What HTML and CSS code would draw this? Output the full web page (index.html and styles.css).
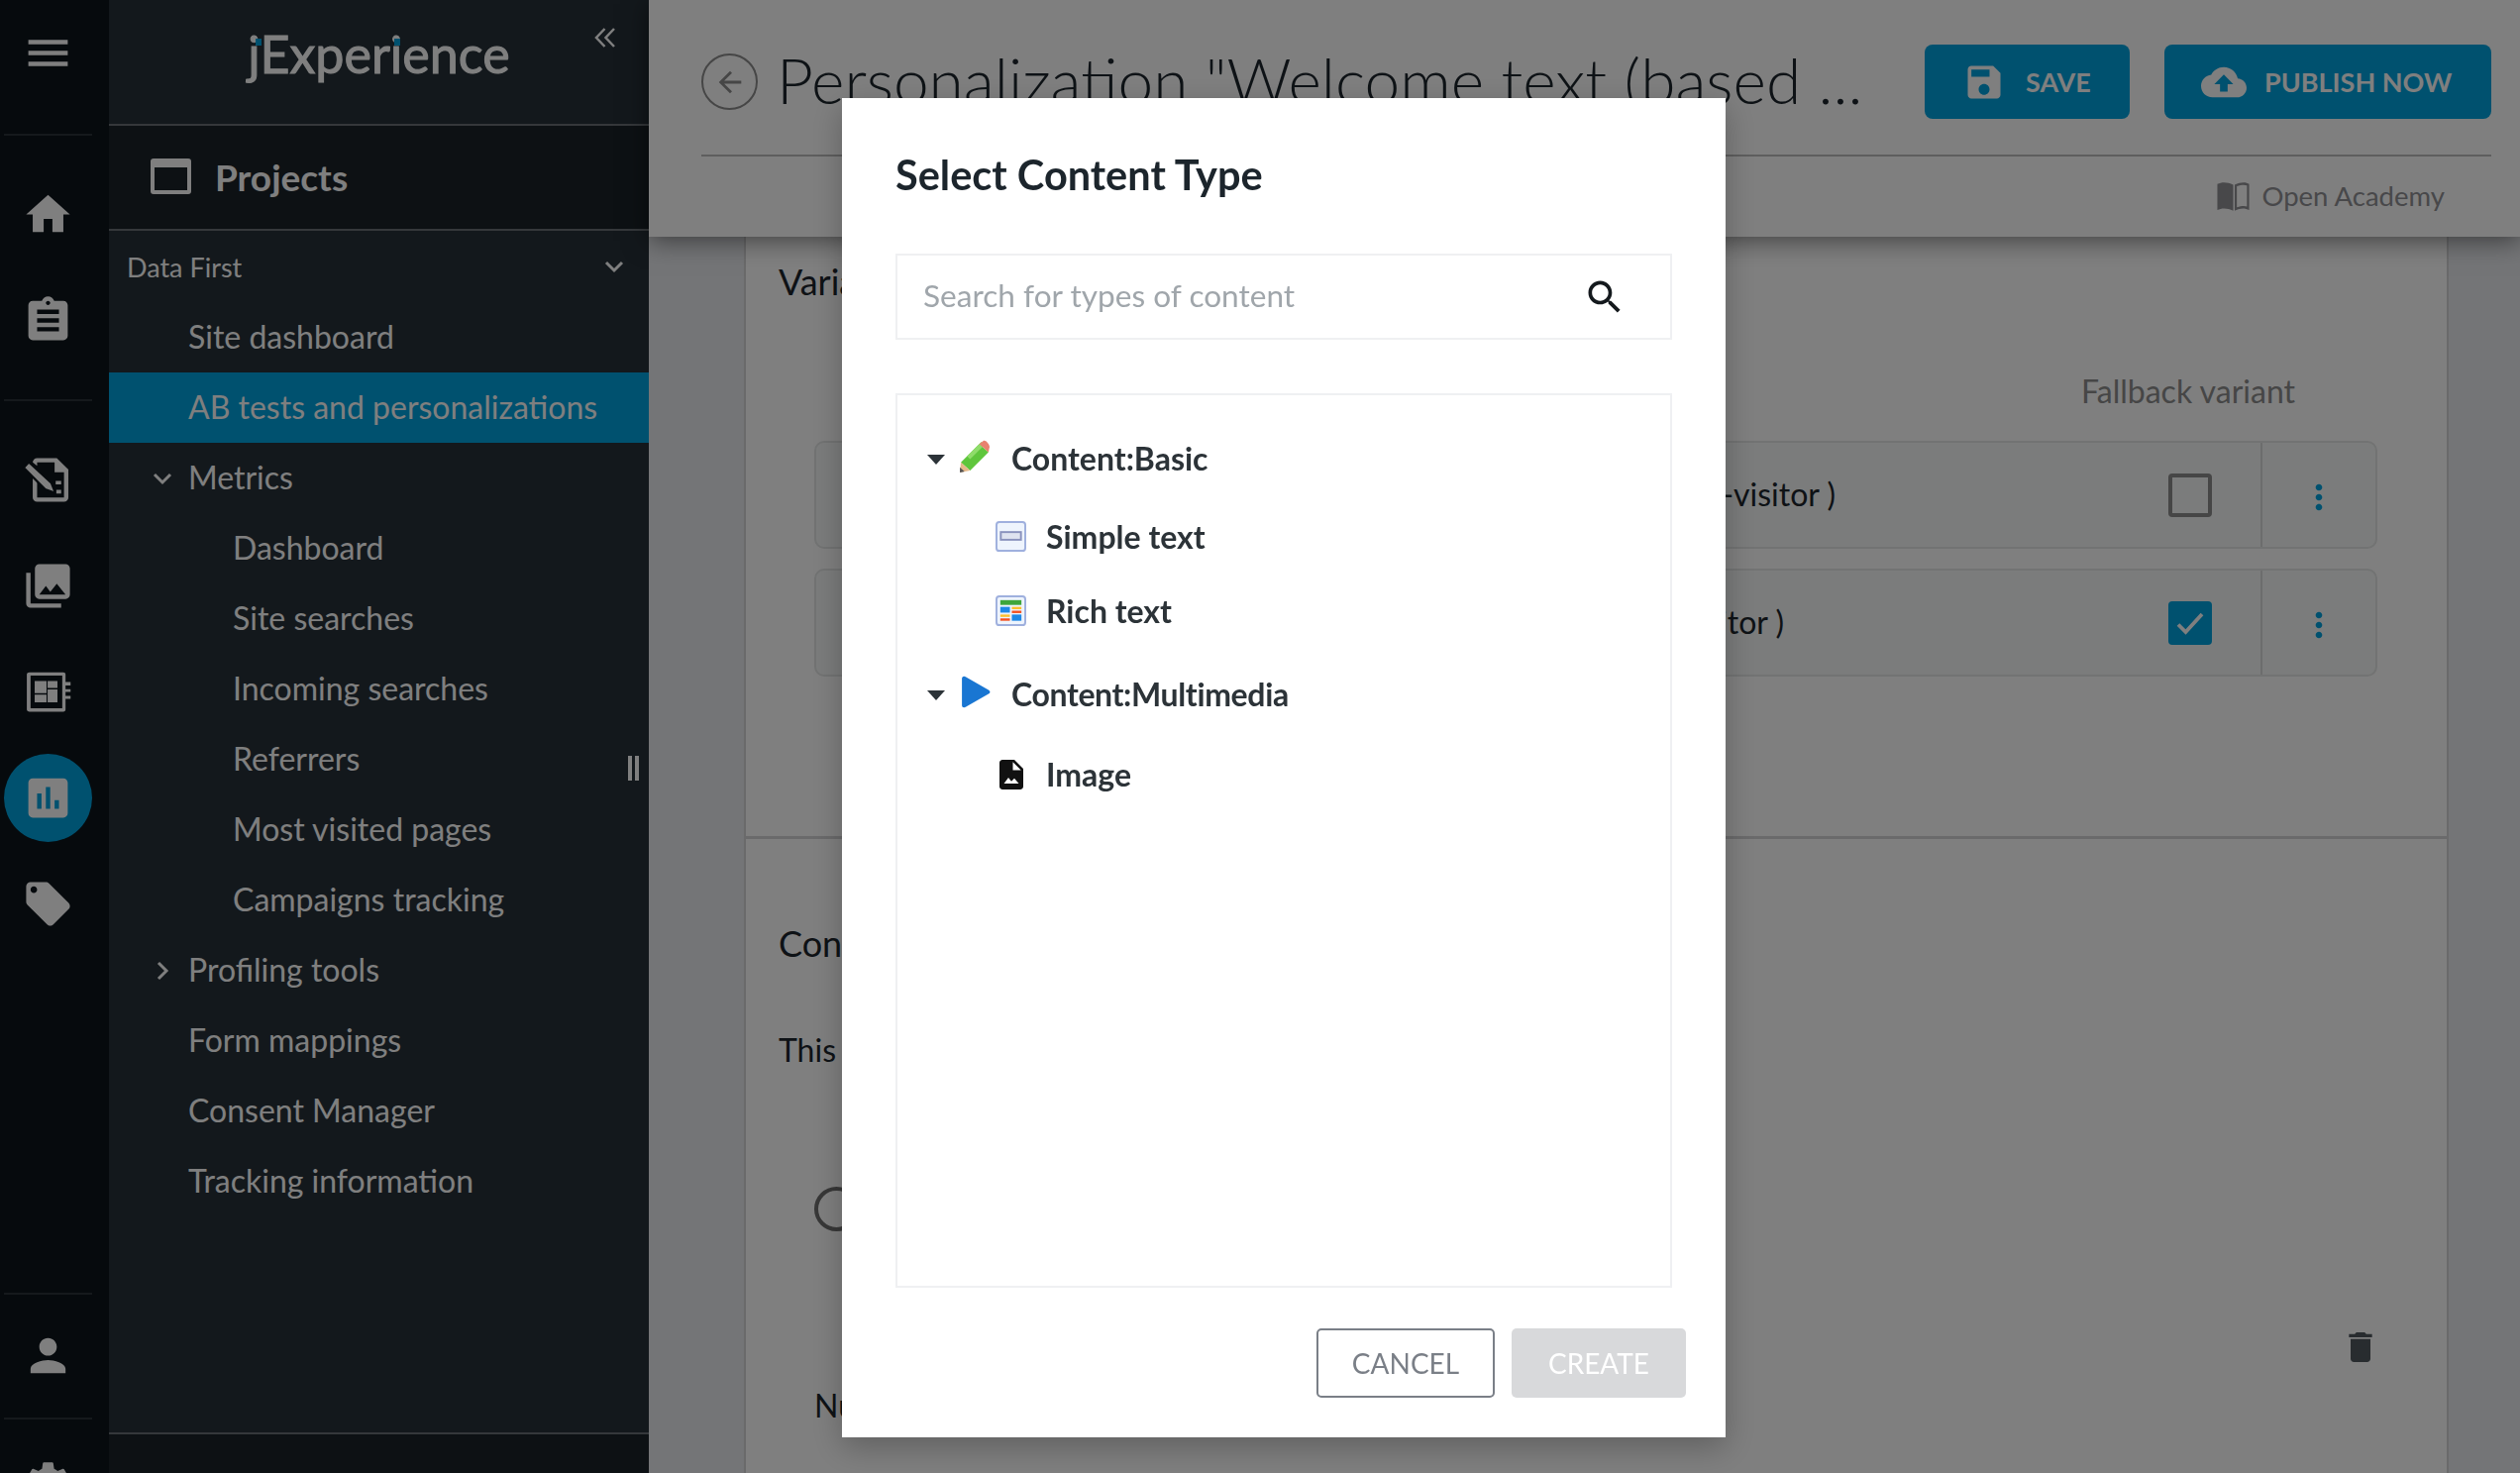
FILE: index.html
```html
<!DOCTYPE html>
<html lang="en">
<head>
    <meta charset="UTF-8">
    <meta name="viewport" content="width=device-width, initial-scale=1.0">
    <title>jExperience</title>
    <link rel="stylesheet" href="styles.css">
</head>
<body>
    <div class="app">
        <!-- Icon rail -->
        <nav class="rail">
            <div class="rail-item"><svg viewBox="0 0 24 24"><path d="M3 18h18v-2H3v2zm0-5h18v-2H3v2zm0-7v2h18V6H3z"/></svg></div>
            <hr class="rail-line rail-line-first">
            <div class="rail-item"><svg viewBox="0 0 24 24"><path d="M10 20v-6h4v6h5v-8h3L12 3 2 12h3v8z"/></svg></div>
            <div class="rail-item"><svg viewBox="0 0 24 24"><path d="M19 3h-4.180C14.400 1.840 13.300 1 12 1c-1.300 0-2.400.84-2.820 2H5c-1.100 0-2 .9-2 2v14c0 1.100.9 2 2 2h14c1.100 0 2-.9 2-2V5c0-1.100-.9-2-2-2zm-7 0c.55 0 1 .45 1 1s-.45 1-1 1-1-.45-1-1 .45-1 1-1zm5 14H7v-2h10v2zm0-4H7v-2h10v2zm0-4H7V7h10v2z"/></svg></div>
            <hr class="rail-line">
            <div class="rail-item">
                <svg viewBox="0 0 24 24">
                    <path d="M7 2h9l5.300 5.300V20c0 1.100-.9 2-2 2H7c-1.100 0-2-.9-2-2v-9l2 2v7h12.300V8.500H15V4H7v1.500L5 4c0-1.100.9-2 2-2z"/>
                    <path class="pencil" d="M.8 6.400L3.200 3.800l10.300 9.500 1.900 4.700-4.700-1.700z"/>
                    <path d="M15.500 12.500h2.500v1.500h-2.500zM15.800 16.500H18v1.700h-2.200z"/>
                </svg>
            </div>
            <div class="rail-item"><svg viewBox="0 0 24 24"><path d="M22 16V4c0-1.100-.9-2-2-2H8c-1.100 0-2 .9-2 2v12c0 1.100.9 2 2 2h12c1.100 0 2-.9 2-2zm-11-4l2.030 2.710L16 11l4 5H8l3-4zM2 6v14c0 1.100.9 2 2 2h14v-2H4V6H2z"/></svg></div>
            <div class="rail-item">
                <svg viewBox="0 0 24 24"><path fill-rule="evenodd" d="M3.500 3H19c.6 0 1 .4 1 1v16c0 .6-.4 1-1 1H3.500c-.6 0-1.200-.4-1.200-1V4c0-.6.6-1 1.200-1zM4 4.500v15h14.500v-15H4zM5.900 7h5.400v5.600H5.900V7zm5.900 0h4.500v3.200h-4.500V7zm0 3.900h4.500v5.900h-4.500v-5.900zm-5.900 2.300h5.400v3.600H5.900v-3.600zM20 7.500h2.300V9H20V7.500zm0 3.200h2.300V12H20v-1.300zm0 3.100h2.300v1.400H20v-1.400z"/></svg>
            </div>
            <div class="rail-item active"><svg viewBox="0 0 24 24"><path d="M19 3H5c-1.100 0-2 .9-2 2v14c0 1.100.9 2 2 2h14c1.100 0 2-.9 2-2V5c0-1.100-.9-2-2-2zM9 17H7v-7h2v7zm4 0h-2V7h2v10zm4 0h-2v-4h2v4z"/></svg></div>
            <div class="rail-item"><svg viewBox="0 0 24 24"><path d="M21.410 11.580l-9-9C12.050 2.220 11.550 2 11 2H4c-1.100 0-2 .9-2 2v7c0 .55.22 1.050.59 1.420l9 9c.36.36.86.58 1.410.58.55 0 1.050-.22 1.410-.59l7-7c.37-.36.59-.86.59-1.410 0-.55-.23-1.060-.59-1.420zM5.500 7C4.670 7 4 6.330 4 5.500S4.670 4 5.500 4 7 4.670 7 5.500 6.330 7 5.500 7z"/></svg></div>
            <div class="rail-bottom">
                <hr class="rail-line">
                <div class="rail-item"><svg viewBox="0 0 24 24"><path d="M12 12c2.210 0 4-1.790 4-4s-1.790-4-4-4-4 1.790-4 4 1.790 4 4 4zm0 2c-2.670 0-8 1.340-8 4v2h16v-2c0-2.660-5.330-4-8-4z"/></svg></div>
                <hr class="rail-line rail-line-last">
                <div class="rail-item"><svg viewBox="0 0 24 24"><path d="M19.140 12.940c.04-.3.06-.61.06-.94 0-.32-.02-.64-.07-.94l2.030-1.580c.18-.14.23-.41.12-.61l-1.920-3.320c-.12-.22-.37-.29-.59-.22l-2.390.96c-.5-.38-1.030-.7-1.620-.94l-.36-2.540c-.04-.24-.24-.41-.48-.41h-3.840c-.24 0-.43.17-.47.41l-.36 2.540c-.59.24-1.130.57-1.620.94l-2.390-.96c-.22-.08-.47 0-.59.22L2.740 8.870c-.12.21-.08.47.12.61l2.030 1.580c-.05.3-.09.63-.09.94s.02.64.07.94l-2.030 1.580c-.18.14-.23.41-.12.61l1.920 3.320c.12.22.37.29.59.22l2.390-.96c.5.38 1.030.7 1.620.94l.36 2.540c.05.24.24.41.48.41h3.840c.24 0 .44-.17.47-.41l.36-2.540c.59-.24 1.130-.56 1.620-.94l2.390.96c.22.08.47 0 .59-.22l1.920-3.320c.12-.22.07-.47-.12-.61l-2.010-1.580zM12 15.600c-1.980 0-3.600-1.620-3.600-3.600s1.620-3.600 3.600-3.600 3.600 1.620 3.600 3.600-1.620 3.600-3.600 3.600z"/></svg></div>
            </div>
        </nav>

        <!-- Sidebar -->
        <aside class="sidebar">
            <div class="logo-bar">
                <div class="logo">jExperience<i class="logo-dot dot-j"></i><i class="logo-dot dot-i"></i></div>
                <svg class="collapse" viewBox="0 0 24 24"><path d="M11.500 3L3 12l8.500 9M21 3l-8.500 9 8.500 9"/></svg>
            </div>
            <div class="projects">
                <i class="projects-icon"></i>
                <span>Projects</span>
            </div>
            <div class="site-select">
                <span>Data First</span>
                <svg class="chev" viewBox="0 0 24 24"><path d="M4 8l8 8 8-8"/></svg>
            </div>
            <ul class="menu">
                <li>Site dashboard</li>
                <li class="selected">AB tests and personalizations</li>
                <li><svg class="chev" viewBox="0 0 24 24"><path d="M4 8l8 8 8-8"/></svg>Metrics</li>
                <li class="sub">Dashboard</li>
                <li class="sub">Site searches</li>
                <li class="sub">Incoming searches</li>
                <li class="sub">Referrers</li>
                <li class="sub">Most visited pages</li>
                <li class="sub">Campaigns tracking</li>
                <li><svg class="chev" viewBox="0 0 24 24"><path d="M8 4l8 8-8 8"/></svg>Profiling tools</li>
                <li>Form mappings</li>
                <li>Consent Manager</li>
                <li>Tracking information</li>
            </ul>
            <div class="resize-handle"></div>
            <div class="sidebar-foot"></div>
        </aside>

        <!-- Page behind the dialog -->
        <main class="main">
            <header class="page-head">
                <div class="head-top">
                    <div class="back">
                        <svg viewBox="0 0 24 24"><path d="M20 11H7.830l5.590-5.590L12 4l-8 8 8 8 1.410-1.410L7.830 13H20v-2z"/></svg>
                    </div>
                    <h1>Personalization "Welcome text (based ...</h1>
                    <button class="btn-primary btn-save">
                        <svg viewBox="0 0 24 24"><path d="M17 3H5c-1.110 0-2 .9-2 2v14c0 1.100.89 2 2 2h14c1.100 0 2-.9 2-2V7l-4-4zm-5 16c-1.660 0-3-1.340-3-3s1.340-3 3-3 3 1.340 3 3-1.340 3-3 3zm3-10H5V5h10v4z"/></svg>
                        SAVE
                    </button>
                    <button class="btn-primary btn-publish">
                        <svg viewBox="0 0 24 24"><path d="M19.350 10.040C18.670 6.590 15.640 4 12 4 9.110 4 6.600 5.640 5.350 8.040 2.340 8.360 0 10.910 0 14c0 3.310 2.690 6 6 6h13c2.760 0 5-2.240 5-5 0-2.640-2.050-4.780-4.650-4.960zM14 13v4h-4v-4H7l5-5 5 5h-3z"/></svg>
                        PUBLISH NOW
                    </button>
                </div>
                <div class="head-links">
                    <svg viewBox="0 0 24 24"><path fill-rule="evenodd" d="M1 4c3-1.500 7-1.500 11 .5v18c-4-2-8-2-11-.5V4zm12 .5c4-2 8-2 10-.5v18c-3-1.500-6-1.500-10 .5v-18zm1.500 1v14.600c3-1.100 5.500-1.200 7-.6V5c-1.500-.6-4-.5-7 .5z"/></svg>
                    <span>Open Academy</span>
                </div>
            </header>

            <div class="card">
                <section class="variants">
                    <h2>Variants</h2>
                    <div class="fallback-label">Fallback variant</div>
                    <div class="variant-row">
                        <div class="variant-name">Welcome ( non-visitor )</div>
                        <div class="checkbox"></div>
                        <div class="variant-more"><svg viewBox="0 0 24 24"><path d="M12 8c1.100 0 2-.9 2-2s-.9-2-2-2-2 .9-2 2 .9 2 2 2zm0 2c-1.100 0-2 .9-2 2s.9 2 2 2 2-.9 2-2-.9-2-2-2zm0 6c-1.100 0-2 .9-2 2s.9 2 2 2 2-.9 2-2-.9-2-2-2z"/></svg></div>
                    </div>
                    <div class="variant-row">
                        <div class="variant-name name-short">Welcome ( visitor )</div>
                        <div class="checkbox checked"><svg viewBox="0 0 24 24"><path d="M4 13l5 5L20 6"/></svg></div>
                        <div class="variant-more"><svg viewBox="0 0 24 24"><path d="M12 8c1.100 0 2-.9 2-2s-.9-2-2-2-2 .9-2 2 .9 2 2 2zm0 2c-1.100 0-2 .9-2 2s.9 2 2 2 2-.9 2-2-.9-2-2-2zm0 6c-1.100 0-2 .9-2 2s.9 2 2 2 2-.9 2-2-.9-2-2-2z"/></svg></div>
                    </div>
                </section>
                <section class="conditions">
                    <h2>Conditions</h2>
                    <p>This personalization</p>
                    <div class="cond-row">
                        <div class="radio"></div>
                        <svg class="trash" viewBox="0 0 24 24"><path d="M6 19c0 1.100.9 2 2 2h8c1.100 0 2-.9 2-2V7H6v12zM19 4h-3.500l-1-1h-5l-1 1H5v2h14V4z"/></svg>
                    </div>
                    <div class="cond-num">Number</div>
                </section>
            </div>
        </main>
    </div>

    <div class="scrim"></div>

    <!-- Dialog -->
    <div class="dialog">
        <h3>Select Content Type</h3>
        <div class="search">
            <span>Search for types of content</span>
            <svg viewBox="0 0 24 24"><path d="M15.500 14h-.79l-.28-.27C15.410 12.590 16 11.110 16 9.500 16 5.910 13.090 3 9.500 3S3 5.910 3 9.500 5.910 16 9.500 16c1.610 0 3.090-.59 4.230-1.570l.27.28v.79l5 4.990L20.490 19l-4.990-5zm-6 0C7.010 14 5 11.990 5 9.500S7.010 5 9.500 5 14 7.010 14 9.500 11.990 14 9.500 14z"/></svg>
        </div>
        <div class="tree">
            <div class="tree-group">
                <i class="caret"></i>
                <svg class="tree-icon" viewBox="0 0 32 32">
                    <path d="M2 22L20 4l9 8-18 18z" fill="#5fc63c"/>
                    <path d="M8 16L22 2l3 3L11 19z" fill="#8fdc6a"/>
                    <path d="M20 4l4-3c2-1 6 3 6 6l-1 5z" fill="#e8826f"/>
                    <path d="M2 22l9 8-10 2z" fill="#e6b98a"/>
                    <path d="M1 27l4.500 4L1 32z" fill="#555"/>
                </svg>
                <span>Content:Basic</span>
            </div>
            <div class="tree-leaf">
                <svg class="tree-icon" viewBox="0 0 32 32">
                    <rect x="1" y="1" width="30" height="30" rx="3" fill="#eef4fd" stroke="#9fb0de" stroke-width="2"/>
                    <rect x="5.500" y="11.500" width="21" height="8" fill="#dfe3f0" stroke="#8a92bd" stroke-width="2"/>
                </svg>
                <span>Simple text</span>
            </div>
            <div class="tree-leaf">
                <svg class="tree-icon" viewBox="0 0 32 32">
                    <rect x="1" y="1" width="30" height="30" rx="3" fill="#eef4fd" stroke="#9fb0de" stroke-width="2"/>
                    <rect x="5" y="5" width="22" height="5" fill="#3da63a"/>
                    <rect x="5" y="12" width="10" height="6" fill="#1e88e5"/>
                    <rect x="17" y="12" width="10" height="2.500" fill="#fbc02d"/>
                    <rect x="17" y="16" width="10" height="2.500" fill="#f4511e"/>
                    <rect x="5" y="20" width="10" height="2.500" fill="#fbc02d"/>
                    <rect x="5" y="24" width="10" height="2.500" fill="#f4511e"/>
                    <rect x="17" y="20" width="10" height="6.500" fill="#1e88e5"/>
                </svg>
                <span>Rich text</span>
            </div>
            <div class="tree-group group-second">
                <i class="caret"></i>
                <svg class="tree-icon" viewBox="0 0 32 32"><path d="M3 3c0-2 2-3 4-1.500l22 12.500c2 1.200 2 2.800 0 4L7 30.500C5 32 3 31 3 29z" fill="#1976d2"/></svg>
                <span>Content:Multimedia</span>
            </div>
            <div class="tree-leaf leaf-last">
                <svg class="tree-icon icon-image" viewBox="0 0 24 24"><path d="M14 2H6c-1.100 0-2 .9-2 2v16c0 1.100.9 2 2 2h12c1.100 0 2-.9 2-2V8l-6-6zm-1 7V3.500L18.500 9H13zM7 18l3-4 2 2.500 2-2 3 3.500H7z" fill="#111"/></svg>
                <span>Image</span>
            </div>
        </div>
        <div class="dialog-actions">
            <button class="btn-cancel">CANCEL</button>
            <button class="btn-create">CREATE</button>
        </div>
    </div>
</body>
</html>
```

FILE: styles.css
```css
* {
    box-sizing: border-box;
}

html, body {
    margin: 0;
    padding: 0;
    height: 100%;
    overflow: hidden;
}

body {
    font-family: Lato, "Noto Sans", sans-serif;
    color: #1c252c;
    background-color: #e8eaee;
}

svg {
    display: block;
    fill: currentColor;
}

.app {
    display: flex;
    height: 1487px;
    overflow: hidden;
}

/* Rail */
.rail {
    width: 110px;
    flex: none;
    display: flex;
    flex-direction: column;
    background-color: #0c141a;
    color: #fff;
}

.rail-item {
    width: 97px;
    height: 107px;
    flex: none;
    display: flex;
    align-items: center;
    justify-content: center;
}

.rail-item svg {
    width: 53px;
    height: 53px;
}

.rail-item .pencil {
    stroke: #0c141a;
    stroke-width: 1;
}

.rail-item.active {
    width: 89px;
    height: 89px;
    margin: 9px 4px;
    border-radius: 50%;
    background-color: #00a2de;
}

.rail-line {
    height: 2px;
    flex: none;
    margin: 26px 17px 26px 4px;
    border: 0;
    background-color: #2b3339;
}

.rail-line-first {
    margin-top: 28px;
}

.rail-bottom {
    margin-top: auto;
    margin-bottom: -64px;
}

.rail-bottom .rail-line {
    margin-top: 0;
    margin-bottom: 8px;
}

.rail-bottom .rail-line-last {
    margin-top: 9px;
    margin-bottom: 11px;
}

/* Sidebar */
.sidebar {
    width: 545px;
    flex: none;
    position: relative;
    display: flex;
    flex-direction: column;
    background-color: #263038;
    color: #fff;
}

.logo-bar {
    height: 127px;
    flex: none;
    display: flex;
    justify-content: center;
    padding-top: 21px;
    border-bottom: 2px solid #6a7076;
}

.logo {
    position: relative;
    font-size: 52px;
    line-height: 66px;
    height: 66px;
    -webkit-text-stroke: 1px #fff;
}

.logo-dot {
    position: absolute;
    width: 6px;
    height: 7px;
    background-color: #00a2de;
}

.dot-j {
    left: 8px;
    top: 18px;
}

.dot-i {
    left: 148px;
    top: 18px;
}

.collapse {
    position: absolute;
    left: 488px;
    top: 26px;
    width: 26px;
    height: 24px;
    fill: none;
    stroke: #fff;
    stroke-width: 2.5;
}

.projects {
    height: 106px;
    flex: none;
    display: flex;
    align-items: center;
    padding: 0 0 2px 42px;
    background-color: #1a2228;
    border-bottom: 2px solid #6a7076;
    font-size: 37px;
    font-weight: 700;
}

.projects-icon {
    width: 41px;
    height: 36px;
    margin-right: 24px;
    border: 4px solid #fff;
    border-top-width: 9px;
    border-radius: 3px;
}

.site-select {
    height: 72px;
    flex: none;
    display: flex;
    align-items: center;
    justify-content: space-between;
    padding: 0 23px 0 18px;
    font-size: 27px;
}

.chev {
    width: 24px;
    height: 24px;
    fill: none;
    stroke: #fff;
    stroke-width: 3;
}

.menu {
    list-style: none;
    margin: 0;
    padding: 0;
    font-size: 32px;
}

.menu li {
    position: relative;
    height: 71px;
    display: flex;
    align-items: center;
    padding: 0 0 2px 80px;
}

.menu li .chev {
    position: absolute;
    left: 42px;
    top: 24px;
}

.menu li.sub {
    padding-left: 125px;
}

.menu li.selected {
    background-color: #00a2de;
}

.resize-handle {
    position: absolute;
    left: 524px;
    top: 763px;
    width: 11px;
    height: 25px;
    border-left: 4px solid #fff;
    border-right: 4px solid #fff;
}

.sidebar-foot {
    position: absolute;
    left: 0;
    right: 0;
    top: 1446px;
    bottom: 0;
    background-color: #1a2228;
    border-top: 2px solid #6a7076;
}

/* Page */
.main {
    flex: 1;
    min-width: 0;
    position: relative;
}

.page-head {
    position: relative;
    z-index: 1;
    height: 239px;
    padding: 0 29px 0 53px;
    background-color: #fff;
    box-shadow: 0 4px 24px rgba(0, 0, 0, 0.5);
}

.head-top {
    height: 158px;
    display: flex;
    align-items: flex-start;
    padding-top: 45px;
    border-bottom: 2px solid #bcbcbc;
}

.back {
    width: 57px;
    height: 57px;
    flex: none;
    margin-top: 9px;
    display: flex;
    align-items: center;
    justify-content: center;
    border: 2px solid #8c8c8c;
    border-radius: 50%;
    color: #8c8c8c;
}

.back svg {
    width: 34px;
    height: 34px;
}

h1 {
    flex: 1;
    min-width: 0;
    margin: -4px 0 0 19px;
    font-size: 64px;
    line-height: 80px;
    font-weight: 300;
    white-space: nowrap;
}

.btn-primary {
    height: 75px;
    flex: none;
    display: flex;
    align-items: center;
    border: 0;
    border-radius: 8px;
    background-color: #00a2de;
    color: #fff;
    font-family: inherit;
    font-size: 27px;
    font-weight: 700;
}

.btn-save {
    width: 207px;
    margin-right: 35px;
    padding-left: 38px;
}

.btn-save svg {
    width: 44px;
    height: 44px;
    margin-right: 20px;
}

.btn-publish {
    width: 330px;
    padding-left: 37px;
}

.btn-publish svg {
    width: 46px;
    height: 46px;
    margin-right: 18px;
}

.head-links {
    height: 79px;
    display: flex;
    align-items: center;
    justify-content: flex-end;
    padding-right: 47px;
    font-size: 27.5px;
    color: #909094;
}

.head-links svg {
    width: 35px;
    height: 35px;
    margin-right: 11px;
}

.card {
    margin: 0 72px 0 96px;
    height: 1248px;
    background-color: #fff;
    border-left: 2px solid #d4d4d6;
    border-right: 2px solid #d4d4d6;
}

h2 {
    margin: 0;
    font-size: 36px;
    line-height: 44px;
    font-weight: 400;
}

.variants {
    height: 608px;
    padding: 23px 70px 0 33px;
    border-bottom: 3px solid #d4d4d6;
}

.fallback-label {
    margin: 67px 83px 28px 0;
    text-align: right;
    font-size: 32px;
    line-height: 44px;
    color: #8c8c8c;
}

.variant-row {
    height: 109px;
    margin: 0 0 20px 36px;
    display: flex;
    align-items: center;
    background-color: #f6f9f8;
    border: 2px solid #e4e6e6;
    border-radius: 10px;
    font-size: 32px;
}

.variant-name {
    flex: 1;
    min-width: 0;
    padding: 0 336px 3px 0;
    text-align: right;
    white-space: nowrap;
}

.name-short {
    padding-right: 388px;
}

.checkbox {
    width: 44px;
    height: 44px;
    flex: none;
    margin-right: 49px;
    border: 4px solid #8c8c8c;
    border-radius: 4px;
}

.checkbox.checked {
    border: 0;
    background-color: #00a2de;
    color: #fff;
    padding: 4px;
}

.checkbox.checked svg {
    fill: none;
    stroke: currentColor;
    stroke-width: 2.5;
}

.variant-more {
    width: 116px;
    height: 100%;
    flex: none;
    display: flex;
    align-items: center;
    justify-content: center;
    padding-top: 4px;
    border-left: 2px solid #d9dada;
    color: #00a2de;
}

.variant-more svg {
    width: 40px;
    height: 40px;
}

.conditions {
    padding: 83px 70px 0 33px;
}

.conditions p {
    margin: 64px 0 0;
    font-size: 32px;
    line-height: 44px;
}

.cond-row {
    display: flex;
    justify-content: space-between;
    align-items: flex-start;
    margin-top: 116px;
    padding-left: 36px;
}

.radio {
    width: 45px;
    height: 45px;
    border: 4px solid #6f6f6f;
    border-radius: 50%;
}

.trash {
    width: 40px;
    height: 40px;
    margin: 142px -3px 0 0;
    color: #50585f;
}

.cond-num {
    margin-top: 17px;
    padding-left: 36px;
    font-size: 32px;
    line-height: 44px;
}

/* Dialog */
.scrim {
    position: fixed;
    inset: 0;
    z-index: 5;
    background-color: rgba(0, 0, 0, 0.5);
}

.dialog {
    position: fixed;
    z-index: 6;
    left: 850px;
    top: 99px;
    width: 892px;
    height: 1352px;
    padding: 54px 54px 0;
    background-color: #fff;
    box-shadow: 0 10px 30px rgba(0, 0, 0, 0.25);
}

.dialog h3 {
    margin: -1px 0 0;
    font-size: 41.500px;
    line-height: 48px;
    font-weight: 700;
    color: #1c252c;
}

.search {
    height: 87px;
    margin-top: 56px;
    display: flex;
    align-items: center;
    justify-content: space-between;
    padding: 0 44px 3px 26px;
    border: 2px solid #eff0f2;
    font-size: 31.6px;
    color: #a0a6ab;
}

.search svg {
    width: 44px;
    height: 44px;
    margin-top: 3px;
    color: #14191d;
}

.tree {
    height: 903px;
    margin-top: 54px;
    padding: 33px 0 0 30px;
    border: 2px solid #eff0f2;
    font-size: 32px;
    font-weight: 700;
    color: #2c3338;
}

.tree-group, .tree-leaf {
    display: flex;
    align-items: center;
}

.tree-group {
    height: 60px;
}

.group-second {
    margin-top: 16px;
}

.group-second span {
    letter-spacing: -0.36px;
}

.tree-leaf {
    height: 75px;
    padding-left: 69px;
}

.tree-group + .tree-leaf {
    margin-top: 12px;
}

.tree-group + .leaf-last {
    margin-top: 14px;
}

.tree-icon {
    width: 31px;
    height: 31px;
    flex: none;
}

.tree-group .tree-icon {
    width: 33px;
    height: 33px;
    margin-top: -4px;
}

.icon-image {
    width: 36px;
    height: 36px;
    margin-left: -2px;
    margin-right: -3px;
}

.caret {
    width: 0;
    height: 0;
    margin-right: 14px;
    margin-top: 4px;
    border-left: 9px solid transparent;
    border-right: 9px solid transparent;
    border-top: 10px solid #2c3338;
}

.tree-group span {
    margin-left: 20px;
}

.tree-leaf span {
    margin-left: 20px;
}

.dialog-actions {
    display: flex;
    justify-content: flex-end;
    gap: 17px;
    margin: 41px -14px 0 0;
}

.dialog-actions button {
    height: 70px;
    border-radius: 5px;
    font-family: inherit;
    font-size: 28px;
}

.btn-cancel {
    width: 180px;
    background-color: #fff;
    border: 2px solid #7a7f87;
    color: #7a7f87;
}

.btn-create {
    width: 176px;
    background-color: #d8d9db;
    border: 0;
    color: #fff;
}
```
